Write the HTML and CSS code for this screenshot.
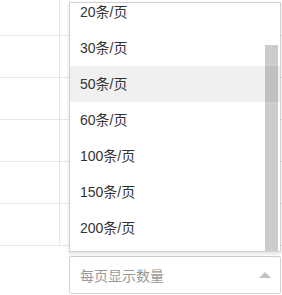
FILE: index.html
```html
<!DOCTYPE html>
<html lang="zh">
<head>
<meta charset="utf-8">
<link rel="stylesheet" href="styles.css">
</head>
<body>
<div class="page">
  <div class="table">
    <div class="row first"><div class="cell c1"></div><div class="cell c2"></div></div>
    <div class="row"><div class="cell c1"></div><div class="cell c2"></div></div>
    <div class="row"><div class="cell c1"></div><div class="cell c2"></div></div>
    <div class="row"><div class="cell c1"></div><div class="cell c2"></div></div>
    <div class="row"><div class="cell c1"></div><div class="cell c2"></div></div>
    <div class="row"><div class="cell c1"></div><div class="cell c2"></div></div>
  </div>
  <div class="select">
    <span class="placeholder">每页显示数量</span>
    <span class="arrow"></span>
  </div>
  <div class="dropdown">
    <ul class="list">
      <li class="item">10条/页</li>
      <li class="item">20条/页</li>
      <li class="item">30条/页</li>
      <li class="item active">50条/页</li>
      <li class="item">60条/页</li>
      <li class="item">100条/页</li>
      <li class="item">150条/页</li>
      <li class="item">200条/页</li>
    </ul>
    <div class="thumb"></div>
  </div>
</div>
</body>
</html>
```
FILE: styles.css
```css
* { box-sizing: border-box; }
html, body { margin: 0; padding: 0; background: #fff; }
body {
  font-family: "Liberation Sans", "Noto Sans CJK SC", sans-serif;
  font-size: 14px;
  color: #333;
}
.page {
  position: relative;
  width: 282px;
  height: 295px;
  overflow: hidden;
  display: flex;
  flex-direction: column;
}
.table { display: flex; flex-direction: column; }
.row {
  display: flex;
  height: 42px;
  border-bottom: 1px solid #e6e6e6;
}
.row.first { height: 36px; }
.cell.c1 { width: 60px; border-right: 1px solid #e6e6e6; }
.cell.c2 { flex: 1; }
.select {
  margin: 10px 0 0 69px;
  width: 212px;
  height: 38px;
  border: 1px solid #d2d2d2;
  border-radius: 2px;
  display: flex;
  align-items: center;
  justify-content: space-between;
  padding: 0 9px 0 10px;
}
.placeholder { color: #999; }
.arrow {
  width: 0; height: 0;
  border-left: 6px solid transparent;
  border-right: 6px solid transparent;
  border-bottom: 6px solid #c2c2c2;
  margin-top: -1px;
}
.dropdown {
  position: absolute;
  left: 69px;
  top: 2px;
  width: 212px;
  height: 250px;
  border: 1px solid #d2d2d2;
  background: #fff;
  box-shadow: 0 2px 4px rgba(0,0,0,0.12);
  overflow: hidden;
}
.list {
  list-style: none;
  margin: -45px 0 0 0;
  padding: 0;
}
.item {
  height: 36px;
  line-height: 36px;
  padding-left: 10px;
  white-space: nowrap;
}
.item.active { background: #f0f0f0; }
.thumb {
  position: absolute;
  right: 2px;
  bottom: 0;
  width: 13px;
  height: 206px;
  background: rgba(0,0,0,0.2);
}
```
